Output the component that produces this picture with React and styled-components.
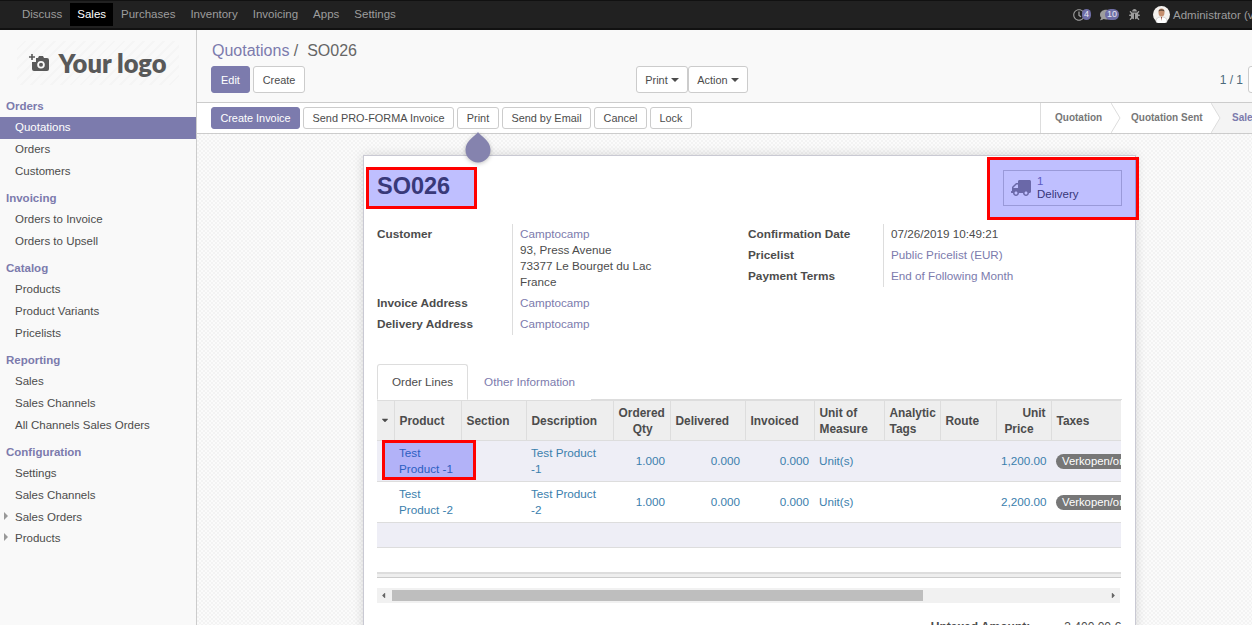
import React from "react";
import styled, { createGlobalStyle } from "styled-components";
import { FaRegClock, FaComment, FaBug, FaTruck, FaCaretDown, FaCaretLeft, FaCaretRight } from "react-icons/fa";

const GlobalStyle = createGlobalStyle`
  html, body {
    margin: 0;
    padding: 0;
    height: 100%;
    overflow: hidden;
    background: #fff;
  }
  body {
    font-family: "Liberation Sans", Arial, sans-serif;
    font-size: 12px;
    color: #4c4c4c;
  }
  * {
    box-sizing: border-box;
  }
`;

const menus = ["Discuss", "Sales", "Purchases", "Inventory", "Invoicing", "Apps", "Settings"];

const sidebar = [
  { title: "Orders", items: ["Quotations", "Orders", "Customers"] },
  { title: "Invoicing", items: ["Orders to Invoice", "Orders to Upsell"] },
  { title: "Catalog", items: ["Products", "Product Variants", "Pricelists"] },
  { title: "Reporting", items: ["Sales", "Sales Channels", "All Channels Sales Orders"] },
  { title: "Configuration", items: ["Settings", "Sales Channels"], folded: ["Sales Orders", "Products"] },
];

const columns = [
  { label: "", width: 17 },
  { label: "Product", width: 67 },
  { label: "Section", width: 65 },
  { label: "Description", width: 87 },
  { label: "Ordered Qty", width: 57, right: true },
  { label: "Delivered", width: 75 },
  { label: "Invoiced", width: 69 },
  { label: "Unit of Measure", width: 70 },
  { label: "Analytic Tags", width: 56 },
  { label: "Route", width: 56 },
  { label: "Unit Price", width: 55, right: true },
  { label: "Taxes", width: 120 },
];

const lines = [
  { name: "Test Product -1", price: "1,200.00" },
  { name: "Test Product -2", price: "2,200.00" },
];

const Page = styled.div`
  height: 625px;
  width: 1252px;
  overflow: hidden;
  display: flex;
  flex-direction: column;
`;

const TopBar = styled.header`
  height: 30px;
  flex: none;
  background: #212121;
  border-top: 1px solid #111;
  border-bottom: 2px solid #111;
  display: flex;
  align-items: center;
  justify-content: space-between;
  padding-left: 15px;
`;

const TopMenu = styled.nav`
  display: flex;
  gap: 1px;
`;

const TopItem = styled.a`
  height: 23px;
  line-height: 23px;
  padding: 0 7px;
  font-size: 11.5px;
  color: ${(p) => (p.$active ? "#fff" : "#9d9d9d")};
  background: ${(p) => (p.$active ? "#000" : "transparent")};
`;

const Systray = styled.div`
  display: flex;
  align-items: center;
  color: #9d9d9d;
  font-size: 11.5px;
  white-space: nowrap;
  width: 179px;
  flex: none;
`;

const TrayIcon = styled.span`
  position: relative;
  display: inline-flex;
  align-items: center;
  width: ${(p) => p.$w}px;
  flex: none;
  font-size: 12px;
`;

const Badge = styled.span`
  position: absolute;
  left: ${(p) => p.$left}px;
  top: 0;
  height: 11px;
  line-height: 11px;
  padding: 0 2px;
  min-width: 9px;
  border-radius: 6px;
  background: #6f6ea6;
  color: #e6e6f2;
  font-size: 9px;
  text-align: center;
`;

const Avatar = styled.svg`
  width: 17px;
  height: 17px;
  margin-right: 3px;
  flex: none;
`;

const Body = styled.div`
  flex: 1;
  display: flex;
  min-height: 0;
`;

const Sidebar = styled.aside`
  width: 197px;
  flex: none;
  background: #f9f9f9;
  border-right: 1px solid #ccc;
`;

const LogoBox = styled.div`
  height: 68px;
  padding: 11px 17px 0;
`;

const LogoInner = styled.div`
  height: 44px;
  margin-bottom: 1px;
  display: flex;
  align-items: center;
  justify-content: center;
  gap: 9px;
  background: repeating-linear-gradient(135deg, #f9f9f9 0 5px, #f5f5f5 5px 7px);
  color: #595959;
  font-family: Lato, sans-serif;
  font-size: 25.5px;
  font-weight: 800;
`;

const SectionTitle = styled.div`
  height: 19px;
  line-height: 17px;
  padding-left: 6px;
  font-weight: 700;
  color: #7c7bad;
  font-size: 11.5px;
`;

const Section = styled.div`
  margin-bottom: 7px;
`;

const MenuItem = styled.div`
  position: relative;
  height: ${(p) => (p.$folded ? 21 : 22)}px;
  line-height: 20px;
  padding-left: 15px;
  font-size: 11.5px;
  color: ${(p) => (p.$active ? "#fff" : "#4c4c4c")};
  background: ${(p) => (p.$active ? "#7c7bad" : "transparent")};
  &:before {
    content: "";
    display: ${(p) => (p.$folded ? "block" : "none")};
    position: absolute;
    left: 4px;
    top: 5px;
    border-left: 4px solid #999;
    border-top: 4px solid transparent;
    border-bottom: 4px solid transparent;
  }
`;

const Main = styled.main`
  position: relative;
  flex: 1;
  min-width: 0;
  display: flex;
  flex-direction: column;
`;

const ControlPanel = styled.div`
  height: 73px;
  flex: none;
  padding: 10px 0 0 14px;
  background: #f9f9f9;
  border-bottom: 1px solid #ccc;
`;

const Breadcrumb = styled.div`
  height: 26px;
  padding-left: 1px;
  font-size: 16px;
  line-height: 22px;
  color: #666;
  white-space: pre;
`;

const CrumbLink = styled.span`
  color: #7c7bad;
`;

const ControlRow = styled.div`
  display: flex;
`;

const ButtonGroup = styled.div`
  display: flex;
  gap: ${(p) => p.$gap || 0}px;
  width: ${(p) => (p.$w ? `${p.$w}px` : "auto")};
  flex: none;
`;

const Button = styled.button`
  height: ${(p) => p.$h || 26}px;
  padding: 0;
  width: ${(p) => p.$w}px;
  font-family: inherit;
  font-size: 10.9px;
  border-radius: 3px;
  border: 1px solid ${(p) => (p.$primary ? "#7c7bad" : "#ccc")};
  background: ${(p) => (p.$primary ? "#7c7bad" : "#fff")};
  color: ${(p) => (p.$primary ? "#fff" : "#4c4c4c")};
  display: inline-flex;
  align-items: center;
  justify-content: center;
  flex: none;
`;

const Caret = styled.span`
  margin-left: 3px;
  border-top: 4px solid #4c4c4c;
  border-left: 4px solid transparent;
  border-right: 4px solid transparent;
`;

const Pager = styled.div`
  display: flex;
  align-items: center;
  height: 27px;
  margin-left: auto;
  color: #4c6a7c;
  font-size: 12px;
  gap: 5px;
`;

const PagerEdge = styled.span`
  width: 20px;
  height: 27px;
  margin-right: -16px;
  border: 1px solid #ccc;
  border-radius: 3px;
  background: #fff;
`;

const StatusRow = styled.div`
  height: 31px;
  flex: none;
  background: #fff;
  border-bottom: 1px solid #ccc;
  display: flex;
  align-items: center;
  padding-left: 14px;
  justify-content: space-between;
`;

const Steps = styled.div`
  display: flex;
  align-self: stretch;
  border-left: 1px solid #ddd;
  width: 212px;
  flex: none;
`;

const Step = styled.div`
  position: relative;
  flex: none;
  width: ${(p) => p.$w}px;
  padding-left: ${(p) => p.$pad}px;
  margin-left: ${(p) => (p.$current ? -10 : 0)}px;
  line-height: 30px;
  font-size: 10px;
  font-weight: 700;
  color: ${(p) => (p.$current ? "#7c7bad" : "#777")};
  background: ${(p) => (p.$current ? "#f4f4f4" : "transparent")};
  white-space: nowrap;
`;

const Chevron = styled.svg`
  position: absolute;
  z-index: 1;
  right: 0;
  top: 0;
  width: 10px;
  height: 30px;
`;

const Viewport = styled.div`
  flex: 1;
  min-height: 0;
  overflow: hidden;
  padding: 21px 0 0 166px;
  background-color: #f8f8f8;
  background-image: repeating-conic-gradient(#f3f3f3 0 25%, #fbfbfb 0 50%);
  background-size: 4px 4px;
`;

const Droplet = styled.svg`
  position: absolute;
  left: 266px;
  top: 99px;
  width: 30px;
  height: 34px;
  filter: drop-shadow(0 1px 2px rgba(0, 0, 0, 0.25));
`;

const Sheet = styled.div`
  position: relative;
  width: 773px;
  min-height: 600px;
  padding: 0 13px;
  background: #fff;
  border: 1px solid #c9c9d3;
  box-shadow: 0 0 10px rgba(0, 0, 0, 0.15);
`;

const Marker = styled.div`
  position: absolute;
  left: ${(p) => p.$left}px;
  top: ${(p) => p.$top}px;
  width: ${(p) => p.$w}px;
  height: ${(p) => p.$h}px;
  border: 3px solid #f00;
  background: rgba(0, 0, 255, 0.25);
`;

const SheetHead = styled.div`
  height: 68px;
  padding-top: 14px;
  display: flex;
  justify-content: space-between;
  align-items: flex-start;
`;

const Title = styled.h1`
  margin: 1px 0 0;
  font-size: 23.5px;
  line-height: 30px;
  font-weight: 700;
  color: #4c4c4c;
`;

const StatButton = styled.div`
  width: 119px;
  height: 36px;
  border: 1px solid #ccc;
  display: flex;
  align-items: center;
  padding-left: 7px;
  gap: 6px;
  font-size: 11.5px;
  line-height: 13px;
`;

const TruckIcon = styled(FaTruck)`
  width: 20px;
  height: 18px;
  color: #6a68a8;
  transform: scaleX(-1);
`;

const StatValue = styled.div`
  color: #7c7bad;
`;

const InfoGrid = styled.div`
  display: flex;
  height: 140px;
`;

const InfoColumn = styled.div`
  width: ${(p) => p.$w}px;
  flex: none;
`;

const InfoRow = styled.div`
  display: flex;
`;

const InfoLabel = styled.div`
  width: ${(p) => p.$w}px;
  padding-top: 2px;
  line-height: 16px;
  font-size: 11.8px;
  font-weight: 700;
  flex: none;
`;

const InfoValue = styled.div`
  padding: 2px 0 3px 7px;
  border-left: 1px solid #ddd;
  line-height: 16px;
  font-size: 11.7px;
  color: #4c4c4c;
`;

const Link = styled.a`
  color: #7c7bad;
`;

const Tabs = styled.div`
  display: flex;
  height: 36px;
  border-bottom: 1px solid #ddd;
`;

const Tab = styled.div`
  height: 36px;
  padding: 0 ${(p) => (p.$active ? 14 : 15)}px;
  line-height: 34px;
  font-size: 11.7px;
  color: ${(p) => (p.$active ? "#4c4c4c" : "#7c7bad")};
  background: #fff;
  border: 1px solid ${(p) => (p.$active ? "#ddd" : "transparent")};
  border-bottom-color: ${(p) => (p.$active ? "#fff" : "transparent")};
  border-radius: 3px 3px 0 0;
`;

const TableClip = styled.div`
  width: 744px;
  overflow: hidden;
`;

const Table = styled.table`
  table-layout: fixed;
  width: 794px;
  border-collapse: collapse;
`;

const HeadCell = styled.th`
  height: 40px;
  width: ${(p) => p.$w}px;
  padding: 0 ${(p) => (p.$right ? 5 : 3)}px 0 5px;
  background: #eee;
  border: 1px solid #ddd;
  font-size: 11.9px;
  line-height: 16px;
  font-weight: 700;
  color: #4c4c4c;
  text-align: ${(p) => (p.$right ? "right" : "left")};
  &:first-child {
    border-left: none;
    padding: 0 0 0 3px;
  }
`;

const SortSpace = styled.span`
  display: inline-block;
  width: 12px;
`;

const Row = styled.tr`
  height: ${(p) => p.$h || 41}px;
  background: ${(p) => (p.$shade ? "#eeeef6" : "#fff")};
  border-bottom: 1px solid #ddd;
`;

const Cell = styled.td`
  padding: 0 5px;
  font-size: 11.7px;
  line-height: 16px;
  color: #3b80ad;
  text-align: ${(p) => (p.$right ? "right" : "left")};
  white-space: ${(p) => (p.$nowrap ? "nowrap" : "normal")};
  overflow: hidden;
`;

const TaxTag = styled.span`
  display: inline-block;
  height: 15px;
  line-height: 14px;
  padding: 0 6px;
  border-radius: 8px;
  background: #777;
  color: #fff;
  font-size: 11.3px;
  white-space: nowrap;
`;

const TableFoot = styled.div`
  height: 5px;
  background: #eee;
  border-top: 1px solid #ddd;
  border-bottom: 1px solid #ccc;
`;

const ScrollBar = styled.div`
  height: 15px;
  margin-top: 10px;
  width: 743px;
  background: #f1f1f1;
  display: flex;
  align-items: center;
  justify-content: space-between;
  color: #666;
  font-size: 9px;
  padding: 0 2px;
`;

const ScrollThumb = styled.div`
  width: 531px;
  height: 11px;
  margin-left: 4px;
  margin-right: auto;
  background: #bebebe;
`;

const Totals = styled.div`
  display: flex;
  justify-content: flex-end;
  gap: 34px;
  padding: 17px 1px 0 0;
  font-size: 12px;
`;

const TotalLabel = styled.span`
  font-weight: 700;
`;

const Logo = () => (
  <svg width="20" height="20" viewBox="0 0 20 20">
    <path d="M0 4h6M3 1v6" stroke="#595959" strokeWidth="1.600" fill="none" />
    <path
      fillRule="evenodd"
      fill="#595959"
      d="M7 5h2l1-2h4l1 2h3a2 2 0 0 1 2 2v9a2 2 0 0 1-2 2H5a2 2 0 0 1-2-2V9h4zM12 8a3.800 3.800 0 1 0 0 7.600a3.800 3.800 0 0 0 0-7.600z"
    />
    <circle cx="12" cy="11.800" r="2" fill="#595959" />
  </svg>
);

export default function App() {
  return (
    <Page>
      <GlobalStyle />
      <TopBar>
        <TopMenu>
          {menus.map((m) => (
            <TopItem key={m} $active={m === "Sales"}>
              {m}
            </TopItem>
          ))}
        </TopMenu>
        <Systray>
          <TrayIcon $w={27}>
            <FaRegClock />
            <Badge $left={9}>4</Badge>
          </TrayIcon>
          <TrayIcon $w={29}>
            <FaComment />
            <Badge $left={5}>10</Badge>
          </TrayIcon>
          <TrayIcon $w={24}>
            <FaBug size={11} />
          </TrayIcon>
          <Avatar viewBox="0 0 17 17">
            <circle cx="8.500" cy="8.500" r="8.500" fill="#f4f1ee" />
            <path d="M3 16c0-4 2-5 5.500-5s5.500 1 5.500 5a8.500 8.500 0 0 1-11 0z" fill="#fff" stroke="#aaa" strokeWidth="0.500" />
            <path d="M8 11l.5 4 .5-4z" fill="#8a3b2e" />
            <ellipse cx="8.500" cy="6.500" rx="3" ry="4" fill="#c58f6f" />
            <path d="M5.500 5.500c0-3 6-3 6 0c-1-1-5-1-6 0z" fill="#5b4638" />
          </Avatar>
          Administrator (v
        </Systray>
      </TopBar>
      <Body>
        <Sidebar>
          <LogoBox>
            <LogoInner>
              <Logo />
              Your logo
            </LogoInner>
          </LogoBox>
          {sidebar.map((s) => (
            <Section key={s.title}>
              <SectionTitle>{s.title}</SectionTitle>
              {s.items.map((i) => (
                <MenuItem key={i} $active={i === "Quotations"}>
                  {i}
                </MenuItem>
              ))}
              {(s.folded || []).map((i) => (
                <MenuItem key={i} $folded>
                  {i}
                </MenuItem>
              ))}
            </Section>
          ))}
        </Sidebar>
        <Main>
          <ControlPanel>
            <Breadcrumb>
              <CrumbLink>Quotations</CrumbLink> /  SO026
            </Breadcrumb>
            <ControlRow>
              <ButtonGroup $w={425} $gap={3}>
                <Button $primary $w={39} $h={27}>
                  Edit
                </Button>
                <Button $w={52} $h={27}>
                  Create
                </Button>
              </ButtonGroup>
              <ButtonGroup>
                <Button $w={52} $h={27}>
                  Print
                  <Caret />
                </Button>
                <Button $w={60} $h={27}>
                  Action
                  <Caret />
                </Button>
              </ButtonGroup>
              <Pager>
                1 / 1
                <PagerEdge />
              </Pager>
            </ControlRow>
          </ControlPanel>
          <StatusRow>
            <ButtonGroup $gap={3}>
              <Button $primary $w={89} $h={22}>
                Create Invoice
              </Button>
              <Button $w={151} $h={22}>
                Send PRO-FORMA Invoice
              </Button>
              <Button $w={42} $h={22}>
                Print
              </Button>
              <Button $w={89} $h={22}>
                Send by Email
              </Button>
              <Button $w={53} $h={22}>
                Cancel
              </Button>
              <Button $w={42} $h={22}>
                Lock
              </Button>
            </ButtonGroup>
            <Steps>
              <Step $w={80} $pad={14}>
                Quotation
                <Chevron viewBox="0 0 10 30">
                  <path d="M0 0l9 15L0 30" fill="#fff" stroke="#ddd" />
                </Chevron>
              </Step>
              <Step $w={100} $pad={10}>
                Quotation Sent
                <Chevron viewBox="0 0 10 30">
                  <path d="M0 0l9 15L0 30" fill="#fff" stroke="#ddd" />
                </Chevron>
              </Step>
              <Step $w={42} $pad={21} $current>
                Sales Order
              </Step>
            </Steps>
          </StatusRow>
          <Viewport>
            <Sheet>
              <Marker $left={2} $top={11} $w={111} $h={42} />
              <Marker $left={623} $top={1} $w={152} $h={63} />
              <Marker $left={18} $top={284} $w={94} $h={40} />
              <SheetHead>
                <Title>SO026</Title>
                <StatButton>
                  <TruckIcon />
                  <div>
                    <StatValue>1</StatValue>
                    Delivery
                  </div>
                </StatButton>
              </SheetHead>
              <InfoGrid>
                <InfoColumn $w={371}>
                  <InfoRow>
                    <InfoLabel $w={135}>Customer</InfoLabel>
                    <InfoValue>
                      <Link>Camptocamp</Link>
                      <br />
                      93, Press Avenue
                      <br />
                      73377 Le Bourget du Lac
                      <br />
                      France
                    </InfoValue>
                  </InfoRow>
                  <InfoRow>
                    <InfoLabel $w={135}>Invoice Address</InfoLabel>
                    <InfoValue>
                      <Link>Camptocamp</Link>
                    </InfoValue>
                  </InfoRow>
                  <InfoRow>
                    <InfoLabel $w={135}>Delivery Address</InfoLabel>
                    <InfoValue>
                      <Link>Camptocamp</Link>
                    </InfoValue>
                  </InfoRow>
                </InfoColumn>
                <InfoColumn>
                  <InfoRow>
                    <InfoLabel $w={135}>Confirmation Date</InfoLabel>
                    <InfoValue>07/26/2019 10:49:21</InfoValue>
                  </InfoRow>
                  <InfoRow>
                    <InfoLabel $w={135}>Pricelist</InfoLabel>
                    <InfoValue>
                      <Link>Public Pricelist (EUR)</Link>
                    </InfoValue>
                  </InfoRow>
                  <InfoRow>
                    <InfoLabel $w={135}>Payment Terms</InfoLabel>
                    <InfoValue>
                      <Link>End of Following Month</Link>
                    </InfoValue>
                  </InfoRow>
                </InfoColumn>
              </InfoGrid>
              <Tabs>
                <Tab $active>Order Lines</Tab>
                <Tab>Other Information</Tab>
              </Tabs>
              <TableClip>
                <Table>
                  <thead>
                    <tr>
                      {columns.map((c, i) => (
                        <HeadCell key={i} $w={c.width} $right={c.right}>
                          {i === 0 ? <FaCaretDown size={10} /> : c.label}
                          {c.right && <SortSpace />}
                        </HeadCell>
                      ))}
                    </tr>
                  </thead>
                  <tbody>
                    {lines.map((l, i) => (
                      <Row key={l.name} $shade={i === 0}>
                        <Cell />
                        <Cell>{l.name}</Cell>
                        <Cell />
                        <Cell>{l.name}</Cell>
                        <Cell $right>1.000</Cell>
                        <Cell $right>0.000</Cell>
                        <Cell $right>0.000</Cell>
                        <Cell>Unit(s)</Cell>
                        <Cell />
                        <Cell />
                        <Cell $right>{l.price}</Cell>
                        <Cell $nowrap>
                          <TaxTag>Verkopen/omzet hoog</TaxTag>
                        </Cell>
                      </Row>
                    ))}
                    <Row $h={25} $shade>
                      <Cell colSpan={12} />
                    </Row>
                    <Row $h={25}>
                      <Cell colSpan={12} />
                    </Row>
                  </tbody>
                </Table>
                <TableFoot />
              </TableClip>
              <ScrollBar>
                <FaCaretLeft />
                <ScrollThumb />
                <FaCaretRight />
              </ScrollBar>
              <Totals>
                <TotalLabel>Untaxed Amount:</TotalLabel>
                <span>3,400.00 €</span>
              </Totals>
            </Sheet>
          </Viewport>
          <Droplet viewBox="0 0 30 34">
            <path d="M15 3c2 4 12.500 8 12.500 18a12.500 12.500 0 0 1-25 0C2.500 11 13 7 15 3z" fill="#8583ae" />
          </Droplet>
        </Main>
      </Body>
    </Page>
  );
}
